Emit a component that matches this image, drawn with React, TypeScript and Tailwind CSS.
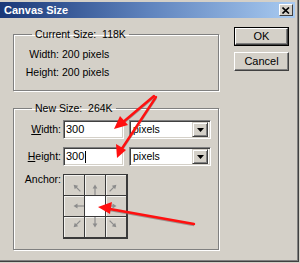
const FONT = "font-['Liberation_Sans',Arial,sans-serif]";

const Arrow = ({ dir }: { dir: string }) => {
    // small gray arrow pointing away from the anchored (centre) cell
    const rot: Record<string, number> = {
        n: 0,
        ne: 45,
        e: 90,
        se: 135,
        s: 180,
        sw: 225,
        w: 270,
        nw: 315,
    };
    const diag = dir.length === 2;
    return (
        <svg width="20" height="20" viewBox="0 0 20 20" className="block">
            <g transform={`rotate(${rot[dir]} 10 10)`}>
                <line
                    x1="10"
                    y1={diag ? 19 : 20}
                    x2="10"
                    y2="13"
                    stroke="#8c8c8c"
                    strokeWidth="1.2"
                />
                <polygon points="10,9.5 7.6,13.5 12.4,13.5" fill="#8c8c8c" />
            </g>
        </svg>
    );
};

const AnchorGrid = () => {
    const cells = ["nw", "n", "ne", "w", "", "e", "sw", "s", "se"];
    return (
        <div className="grid grid-cols-3 border-r-2 border-b-2 border-[#3a3a3a] w-[65px]">
            {cells.map((d, i) => (
                <div
                    key={i}
                    className={`h-[21px] w-[21px] border-l border-t border-[#3a3a3a] ${
                        d === ""
                            ? "bg-white"
                            : "bg-[#d4d0c8] shadow-[inset_1px_1px_0_#f4f3f0]"
                    }`}
                >
                    {d !== "" && <Arrow dir={d} />}
                </div>
            ))}
        </div>
    );
};

const Sunken = ({ children, className }: { children: React.ReactNode; className: string }) => (
    <div
        className={`h-[19px] bg-white border border-t-[#808080] border-l-[#808080] border-b-white border-r-white shadow-[inset_1px_1px_0_#404040,inset_-1px_-1px_0_#d4d0c8] ${className}`}
    >
        {children}
    </div>
);

const UnitSelect = () => (
    <Sunken className="ml-[5px] w-[82px] flex items-center justify-between pl-[3px] pr-[2px]">
        <span className="leading-none">pixels</span>
        <div className="h-[15px] w-[16px] bg-[#d4d0c8] border border-t-[#d4d0c8] border-l-[#d4d0c8] border-b-[#404040] border-r-[#404040] shadow-[inset_1px_1px_0_#ffffff,inset_-1px_-1px_0_#808080] flex items-center justify-center">
            <svg width="7" height="4" viewBox="0 0 7 4">
                <polygon points="0,0 7,0 3.5,4" fill="#000" />
            </svg>
        </div>
    </Sunken>
);

const GroupBox = ({
    legend,
    children,
    className,
}: {
    legend: string;
    children: React.ReactNode;
    className: string;
}) => (
    <fieldset
        className={`border border-[#808080] shadow-[1px_1px_0_#ffffff,inset_1px_1px_0_#ffffff] ${className}`}
    >
        <legend className="ml-[18px] px-[3px] whitespace-pre leading-[13px]">{legend}</legend>
        {children}
    </fieldset>
);

const WinButton = ({ label, isDefault }: { label: string; isDefault?: boolean }) => (
    <div className={`w-[55px] h-[19px] ${isDefault ? "border border-black" : ""}`}>
        <div className="h-full w-full bg-[#d4d0c8] border border-t-white border-l-white border-b-[#404040] border-r-[#404040] shadow-[inset_-1px_-1px_0_#808080] flex items-center justify-center text-[11px]">
            {label}
        </div>
    </div>
);

const App = () => {
    return (
        <div className={`relative w-[300px] h-[263px] bg-[#d4d0c8] overflow-hidden text-[10.5px] text-black ${FONT}`}>
            <div className="h-[262px] w-[299px] border-r border-b border-[#404040] shadow-[inset_-1px_-1px_0_#808080] pt-[2px]">
                {/* title bar */}
                <div className="mr-[3px] h-[16px] bg-gradient-to-r from-[#1a3878] via-[#5f83bd] to-[#a9cbf1] flex items-center justify-between pl-[4px] pr-[2px]">
                    <span className="text-white font-bold text-[11px] leading-none">Canvas Size</span>
                    <div className="h-[12px] w-[14px] bg-[#d4d0c8] border border-t-white border-l-white border-b-[#404040] border-r-[#404040] flex items-center justify-center">
                        <svg width="8" height="7" viewBox="0 0 8 7">
                            <path d="M0.5 0.5 L7 6.5 M7 0.5 L0.5 6.5" stroke="#000" strokeWidth="1.6" />
                        </svg>
                    </div>
                </div>

                <div className="flex">
                    <div className="ml-[13px] mt-[10px] w-[206px] flex flex-col">
                        <GroupBox legend="Current Size:  118K" className="h-[63px] pt-[7px]">
                            <div className="flex flex-col gap-[5px]">
                                <div className="flex leading-[13px]">
                                    <span className="w-[45px] text-right">Width:</span>
                                    <span className="ml-[3px]">200 pixels</span>
                                </div>
                                <div className="flex leading-[13px]">
                                    <span className="w-[45px] text-right">Height:</span>
                                    <span className="ml-[3px]">200 pixels</span>
                                </div>
                            </div>
                        </GroupBox>

                        <GroupBox legend="New Size:  264K" className="mt-[11px] h-[148px] pt-[5px]">
                            <div className="flex flex-col gap-[8px]">
                                <div className="flex items-center">
                                    <span className="w-[47px] text-right">
                                        <span className="underline">W</span>idth:
                                    </span>
                                    <Sunken className="ml-[2px] w-[61px] flex items-center pl-[2px]">
                                        <span className="text-[11px] leading-none">300</span>
                                    </Sunken>
                                    <UnitSelect />
                                </div>
                                <div className="flex items-center">
                                    <span className="w-[47px] text-right">
                                        <span className="underline">H</span>eight:
                                    </span>
                                    <Sunken className="ml-[2px] w-[61px] flex items-center pl-[2px]">
                                        <span className="text-[11px] leading-none">300</span>
                                        <span className="ml-[1px] h-[12px] w-px bg-black" />
                                    </Sunken>
                                    <UnitSelect />
                                </div>
                                <div className="flex items-start">
                                    <span className="w-[47px] text-right leading-[10px]">Anchor:</span>
                                    <div className="ml-[2px]">
                                        <AnchorGrid />
                                    </div>
                                </div>
                            </div>
                        </GroupBox>
                    </div>

                    <div className="ml-[15px] mt-[9px] flex flex-col gap-[6px]">
                        <WinButton label="OK" isDefault />
                        <WinButton label="Cancel" />
                    </div>
                </div>
            </div>

            {/* red annotation arrows */}
            <svg className="absolute inset-0 pointer-events-none" width="300" height="263" viewBox="0 0 300 263">
                <g stroke="#7a6a6a" strokeWidth="2.2" opacity="0.6">
                    <line x1="154" y1="96" x2="122" y2="123" transform="translate(0 1.2)" />
                    <line x1="156" y1="97" x2="121" y2="150" transform="translate(0 1.2)" />
                    <line x1="194" y1="224" x2="110" y2="209" transform="translate(0 1.2)" />
                </g>
                <g stroke="#ff1010" strokeWidth="2.4" strokeLinecap="round">
                    <line x1="154" y1="96" x2="122" y2="123" />
                    <line x1="156" y1="97" x2="121" y2="150" />
                    <line x1="194" y1="224" x2="110" y2="209" />
                </g>
                <g fill="#ff1010">
                    <polygon points="114,129 120,116 128,125" />
                    <polygon points="117,158 116,144 126,150" />
                    <polygon points="98,207 112,202 110,214" />
                </g>
            </svg>
        </div>
    );
};

export default App;
